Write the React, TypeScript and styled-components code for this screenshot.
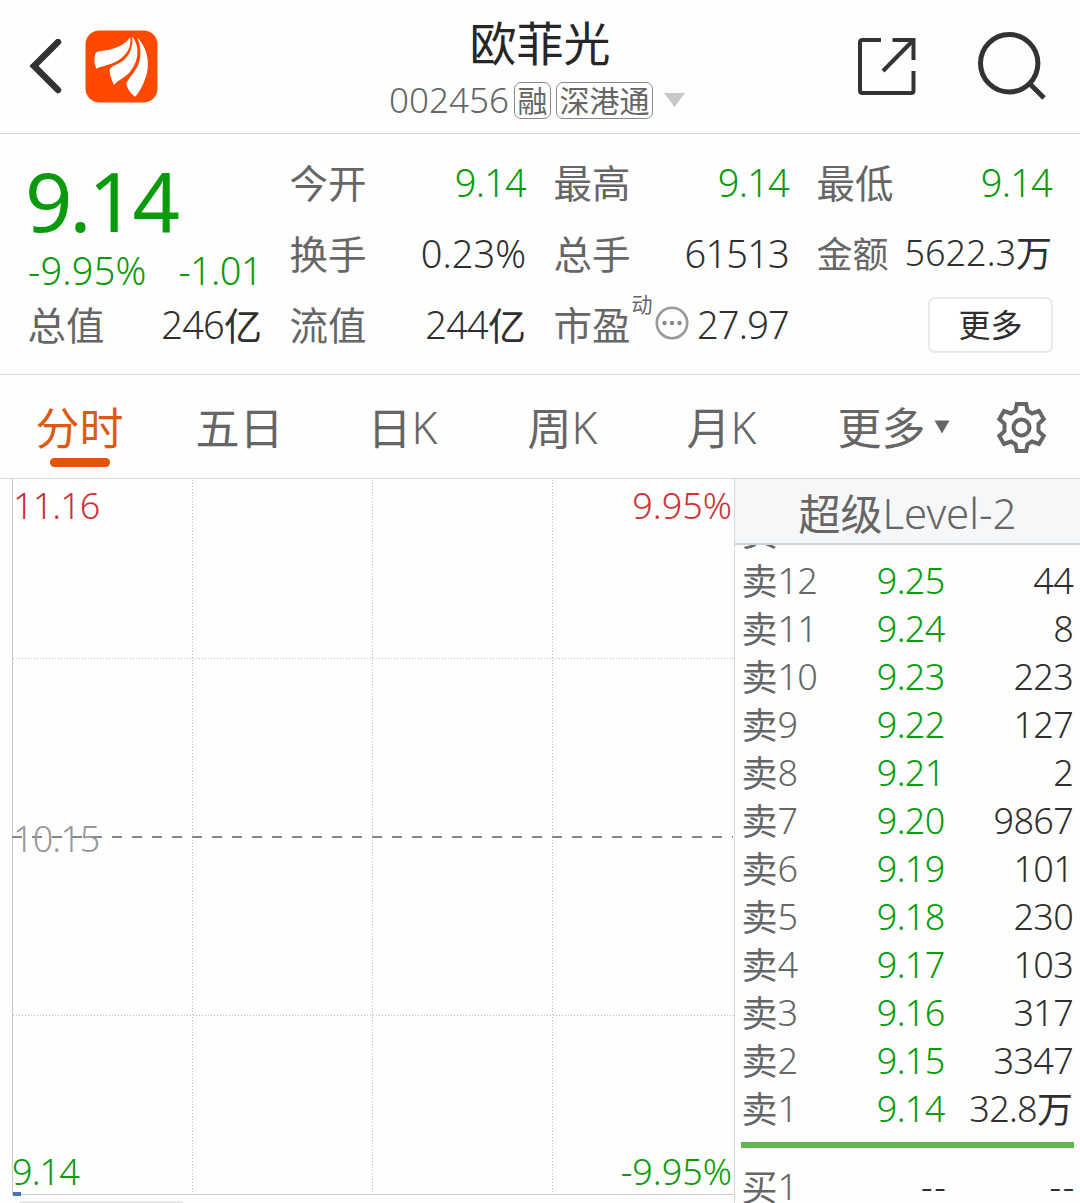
import React from 'react';
import styled, { createGlobalStyle } from 'styled-components';

const GREEN = '#0a9b0c';
const RED = '#cc3333';
const DARK = '#2f2f2f';
const GRAY = '#666666';
const LINE = '#d6d6d6';

const Global = createGlobalStyle`
  * { box-sizing: border-box; }
  html, body { margin: 0; background: #fefefe; }
  body {
    font-family: "Noto Sans", "Noto Sans CJK SC", sans-serif;
    font-weight: 300;
    color: ${DARK};
  }
`;

const Screen = styled.main`
  width: 1080px;
  height: 1203px;
  overflow: hidden;
  display: flex;
  flex-direction: column;
  background: #fefefe;
`;

const Han = styled.span`
  font-family: "Noto Sans CJK SC", sans-serif;
  font-weight: 400;
  line-height: 0;
  letter-spacing: 0;
  vertical-align: -1px;
`;

/* ---------- header ---------- */

const Header = styled.header`
  height: 134px;
  flex: none;
  display: grid;
  grid-template-columns: 360px 1fr 360px;
  border-bottom: 1px solid ${LINE};
`;

const HeaderLeft = styled.div`
  display: flex;
  align-items: center;
  gap: 22px;
  padding-left: 29px;
`;

const HeaderRight = styled.div`
  display: flex;
  align-items: center;
  justify-content: flex-end;
  gap: 60px;
  padding-right: 33px;
`;

const Title = styled.div`
  display: flex;
  flex-direction: column;
  align-items: center;
  padding-top: 12px;
`;

const Name = styled.h1`
  margin: 0;
  font: 400 47px/58px "Noto Sans CJK SC", sans-serif;
  color: #262626;
`;

const CodeRow = styled.div`
  display: flex;
  align-items: center;
  height: 38px;
  margin-top: 11px;
  margin-left: -5px;
  color: ${GRAY};
`;

const Code = styled.span`
  font-size: 35px;
  line-height: 38px;
`;

const Badge = styled.span`
  height: 37px;
  margin-left: 5px;
  padding: 0 2.5px;
  border: 1px solid #888;
  border-radius: 7px;
  font: 400 30px/33px "Noto Sans CJK SC", sans-serif;
`;

const Caret = styled.svg`
  margin-left: 10px;
`;

/* ---------- quote ---------- */

const Quote = styled.section`
  height: 241px;
  flex: none;
  display: grid;
  grid-template-columns: 234px 236px 235px 235px;
  column-gap: 28px;
  padding: 13px 28px 0;
  border-bottom: 1px solid ${LINE};
`;

const Column = styled.div`
  display: grid;
  grid-template-rows: 71px 71px 71px;
`;

const PriceColumn = styled.div`
  display: grid;
  grid-template-rows: 104px 38px 71px;
`;

const Price = styled.div`
  margin-left: -3px;
  font-size: 83px;
  font-weight: 400;
  line-height: 105px;
  letter-spacing: -3.2px;
  color: ${GREEN};
`;

const Change = styled.div`
  display: flex;
  justify-content: space-between;
  font-size: 38px;
  line-height: 38px;
  color: ${GREEN};
`;

const ChangeValue = styled.span<{ $tight?: boolean }>`
  letter-spacing: ${(p) => (p.$tight ? '-0.6px' : '0.2px')};
`;

const Stat = styled.div`
  display: flex;
  align-items: center;
  justify-content: space-between;
  white-space: nowrap;
`;

const StatLabel = styled.span<{ $size?: number }>`
  margin-left: -0.5px;
  padding-bottom: 4px;
  font: 400 ${(p) => p.$size ?? 38.5}px/46px "Noto Sans CJK SC", sans-serif;
  color: ${GRAY};
`;

const StatValue = styled.span<{ $color?: string; $size?: number; $tight?: boolean }>`
  padding-bottom: 2px;
  font-size: ${(p) => p.$size ?? 38}px;
  line-height: 50px;
  letter-spacing: ${(p) => (p.$tight ? '-0.8px' : '0')};
  color: ${(p) => p.$color ?? DARK};
`;

const PeLabel = styled.span`
  display: flex;
  align-items: center;
`;

const Sup = styled.span`
  font: 400 21px/24px "Noto Sans CJK SC", sans-serif;
  color: ${GRAY};
  align-self: flex-start;
  margin: -9px 2px 0 1px;
`;

const Dots = styled.svg`
  margin-bottom: 3px;
`;

const MoreButton = styled.button`
  justify-self: end;
  align-self: center;
  width: 125px;
  height: 56px;
  margin-right: -1px;
  padding: 0 0 4px;
  border: 2px solid #e8eaea;
  border-radius: 7px;
  background: #fff;
  color: ${DARK};
  font: 400 32px/46px "Noto Sans CJK SC", sans-serif;
`;

/* ---------- tabs ---------- */

const Tabs = styled.nav`
  height: 104px;
  flex: none;
  display: flex;
  border-bottom: 1px solid ${LINE};
`;

const Tab = styled.div<{ $width: number; $active?: boolean }>`
  width: ${(p) => p.$width}px;
  display: flex;
  flex-direction: column;
  align-items: center;
  padding-top: 22px;
  font-size: 44px;
  line-height: 60px;
  color: ${(p) => (p.$active ? '#dc5a14' : GRAY)};
`;

const TabText = styled.span`
  display: flex;
  align-items: center;
  gap: 8px;
`;

const TabWord = styled.span`
  height: 60px;
  margin-left: -1px;
`;

const Underline = styled.span`
  width: 60px;
  height: 9px;
  margin-top: 1px;
  border-radius: 5px;
  background: #e85205;
`;

const GearTab = styled.div`
  padding: 25px 0 0 10px;
`;

/* ---------- body ---------- */

const Body = styled.section`
  flex: 1;
  min-height: 0;
  display: flex;
`;

const Chart = styled.div`
  position: relative;
  width: 734px;
  flex: none;
`;

const ChartLabel = styled.span<{ $color: string; $top: number; $left?: number; $right?: number }>`
  position: absolute;
  top: ${(p) => p.$top}px;
  ${(p) => (p.$left !== undefined ? `left: ${p.$left}px; letter-spacing: -0.9px;` : `right: ${p.$right}px;`)}
  font-size: 36px;
  line-height: 48px;
  color: ${(p) => p.$color};
`;

const Book = styled.div`
  flex: 1;
  display: flex;
  flex-direction: column;
  border-left: 1px solid ${LINE};
`;

const BookHeader = styled.div`
  height: 66px;
  flex: none;
  display: flex;
  justify-content: center;
  border-bottom: 2px solid #d3d6d9;
  background: #f6f7f9;
  font-size: 42px;
  line-height: 68px;
  color: ${GRAY};
`;

const BookList = styled.div`
  flex: 1;
  min-height: 0;
  overflow: hidden;
  display: flex;
  flex-direction: column;
`;

const Row = styled.div`
  height: 48px;
  display: grid;
  grid-template-columns: 90px 113px 1fr;
  padding: 0 7px 0 6.5px;
  font-size: 36px;
  line-height: 48px;
  letter-spacing: -0.7px;
  white-space: nowrap;
`;

const Sells = styled.div`
  flex: none;
  margin-top: -37px;

  ${Row}:first-child {
    margin-bottom: 1px;
  }
`;

const Level = styled.span`
  color: ${GRAY};
`;

const Cell = styled.span<{ $color?: string; $wide?: boolean }>`
  text-align: right;
  letter-spacing: ${(p) => (p.$wide ? '1.6px' : 'inherit')};
  margin-right: ${(p) => (p.$wide ? '-3px' : '0')};
  color: ${(p) => p.$color ?? DARK};
`;

const Divider = styled.div`
  height: 6px;
  flex: none;
  margin: 9px 6px 15px;
  background: #5fb64a;
`;

/* ---------- icons ---------- */

const BackIcon = () => (
  <svg width="34" height="56" viewBox="0 0 34 56">
    <path d="M29 3 L5 27 L29 51" fill="none" stroke="#333" strokeWidth="6.5" strokeLinecap="round" />
  </svg>
);

const Logo = () => (
  <svg width="73" height="73" viewBox="0 0 73 73">
    <rect x="0.5" y="0.5" width="72" height="72" rx="14" fill="#ff4800" />
    <path d="M45.3 7.3 C39 16 28 20 15 21.200 Q11 21.500 10.500 23.500 Q8 30 11.300 38.700 C18 35.500 26 35 33 30.500 C42 25 46.500 17 45.300 7.300Z" fill="#fff" />
    <path d="M47.3 6.7 C48 14 46.500 22 40 29 C35 34 29 34.500 25 38.500 C23.500 43 27 50 29 55 C34 49 42 47 46.300 40 C53 31 55.500 17 47.300 6.700Z" fill="#fff" />
    <path d="M52.3 7.7 C56 16 56.500 26 53.500 34 C50.500 42 45 46 41.300 53.300 C42 59 46 64 50.300 66.700 C55 61 58 55 59.700 50 C66 36 63 18 52.300 7.700Z" fill="#fff" />
  </svg>
);

const ShareIcon = () => (
  <svg width="60" height="60" viewBox="0 0 60 60" fill="none" stroke="#333" strokeWidth="4">
    <path d="M24 3 H5.500 Q3 3 3 5.500 V53.500 Q3 56 5.500 56 H54 Q56.500 56 56.500 53.500 V34" />
    <path d="M35.500 3 H56.500 V23" />
    <path d="M56 3.500 L26 34" />
  </svg>
);

const SearchIcon = () => (
  <svg width="70" height="70" viewBox="0 0 70 70" fill="none" stroke="#333" strokeWidth="5">
    <circle cx="32.200" cy="31.300" r="28.700" />
    <path d="M52.500 51.500 L67 66" />
  </svg>
);

const DotsIcon = () => (
  <Dots width="34" height="34" viewBox="0 0 34 34">
    <circle cx="17" cy="17" r="15.200" fill="none" stroke="#999" strokeWidth="2.600" />
    <circle cx="9.500" cy="17" r="2.200" fill="#888" />
    <circle cx="17" cy="17" r="2.200" fill="#888" />
    <circle cx="24.500" cy="17" r="2.200" fill="#888" />
  </Dots>
);

const GearIcon = () => (
  <svg width="54" height="54" viewBox="0 0 54 54" fill="none" stroke={GRAY} strokeWidth="4">
    <path d="M22.800 4 H32.200 L33.500 10.800 L38 13.500 L45 11 L49.700 19 L44.500 23.800 V31.200 L49.700 36 L45 44 L38 41.500 L33.500 44.200 L32.200 51 H22.800 L21.500 44.200 L17 41.500 L10 44 L5.300 36 L10.500 31.200 V23.800 L5.300 19 L10 11 L17 13.500 L21.500 10.800 Z" />
    <circle cx="27.500" cy="27.500" r="8" />
  </svg>
);

const Grid = () => (
  <svg width="734" height="724" viewBox="0 0 734 724" shapeRendering="crispEdges">
    <g stroke="#bdbdbd" strokeWidth="1" strokeDasharray="1 2">
      {[192.5, 372.5, 552.5].map((x) => (
        <path key={x} d={`M${x} 1 V715`} />
      ))}
      {[179.5, 536.5].map((y) => (
        <path key={y} d={`M13 ${y} H734`} />
      ))}
    </g>
    <path d="M12.500 0 V716" stroke="#c8c8c8" />
    <path d="M12 715.500 H733" stroke="#c8c8c8" />
    <path d="M12 358 H733" stroke="#888" strokeWidth="2" strokeDasharray="10 10" />
    <rect x="13" y="713" width="8" height="4" fill="#4477ae" />
    <rect x="17" y="722" width="168" height="12" rx="6" fill="#e6e6e6" />
  </svg>
);

/* ---------- data ---------- */

const sells: [string, string, string][] = [
  ['13', '9.26', '6'],
  ['12', '9.25', '44'],
  ['11', '9.24', '8'],
  ['10', '9.23', '223'],
  ['9', '9.22', '127'],
  ['8', '9.21', '2'],
  ['7', '9.20', '9867'],
  ['6', '9.19', '101'],
  ['5', '9.18', '230'],
  ['4', '9.17', '103'],
  ['3', '9.16', '317'],
  ['2', '9.15', '3347'],
  ['1', '9.14', '32.8万'],
];

const withHan = (text: string) =>
  text.split(/([\u4e00-\u9fff]+)/).filter(Boolean).map((part, i) =>
    /[\u4e00-\u9fff]/.test(part) ? <Han key={i}>{part}</Han> : part,
  );

const StatItem = ({ label, value, color, size, loose }: { label: string; value: string; color?: string; size?: number; loose?: boolean }) => (
  <Stat>
    <StatLabel $size={size}>{label}</StatLabel>
    <StatValue $color={color} $size={size} $tight={!loose}>{withHan(value)}</StatValue>
  </Stat>
);

export default function App() {
  return (
    <Screen>
      <Global />
      <Header>
        <HeaderLeft>
          <BackIcon />
          <Logo />
        </HeaderLeft>
        <Title>
          <Name>欧菲光</Name>
          <CodeRow>
            <Code>002456</Code>
            <Badge>融</Badge>
            <Badge>深港通</Badge>
            <Caret width="23" height="16" viewBox="0 0 23 16">
              <path d="M1 1 H22 L11.500 15Z" fill="#c8c8c8" />
            </Caret>
          </CodeRow>
        </Title>
        <HeaderRight>
          <ShareIcon />
          <SearchIcon />
        </HeaderRight>
      </Header>

      <Quote>
        <PriceColumn>
          <Price>9.14</Price>
          <Change>
            <ChangeValue>-9.95%</ChangeValue>
            <ChangeValue $tight>-1.01</ChangeValue>
          </Change>
          <StatItem label="总值" value="246亿" />
        </PriceColumn>
        <Column>
          <StatItem label="今开" value="9.14" color={GREEN} />
          <StatItem label="换手" value="0.23%" loose />
          <StatItem label="流值" value="244亿" />
        </Column>
        <Column>
          <StatItem label="最高" value="9.14" color={GREEN} />
          <StatItem label="总手" value="61513" />
          <Stat>
            <PeLabel>
              <StatLabel>市盈</StatLabel>
              <Sup>动</Sup>
              <DotsIcon />
            </PeLabel>
            <StatValue $tight>27.97</StatValue>
          </Stat>
        </Column>
        <Column>
          <StatItem label="最低" value="9.14" color={GREEN} />
          <StatItem label="金额" value="5622.3万" size={36} loose />
          <MoreButton>更多</MoreButton>
        </Column>
      </Quote>

      <Tabs>
        <Tab $width={160} $active>
          <TabWord>{withHan('分时')}</TabWord>
          <Underline />
        </Tab>
        <Tab $width={160}><TabWord>{withHan('五日')}</TabWord></Tab>
        <Tab $width={166}><TabWord>{withHan('日K')}</TabWord></Tab>
        <Tab $width={154}><TabWord>{withHan('周K')}</TabWord></Tab>
        <Tab $width={164}><TabWord>{withHan('月K')}</TabWord></Tab>
        <Tab $width={180}>
          <TabText>
            <TabWord>{withHan('更多')}</TabWord>
            <svg width="16" height="14" viewBox="0 0 16 14">
              <path d="M0.500 0.500 H15.500 L8 13.500Z" fill={GRAY} />
            </svg>
          </TabText>
        </Tab>
        <GearTab><GearIcon /></GearTab>
      </Tabs>

      <Body>
        <Chart>
          <Grid />
          <ChartLabel $color={RED} $top={3} $left={13}>11.16</ChartLabel>
          <ChartLabel $color={RED} $top={3} $right={2}>9.95%</ChartLabel>
          <ChartLabel $color="#999" $top={336} $left={13}>10.15</ChartLabel>
          <ChartLabel $color={GREEN} $top={669} $left={12}>9.14</ChartLabel>
          <ChartLabel $color={GREEN} $top={669} $right={2}>-9.95%</ChartLabel>
        </Chart>
        <Book>
          <BookHeader><span>{withHan('超级Level-2')}</span></BookHeader>
          <BookList>
            <Sells>
              {sells.map(([level, price, volume]) => (
                <Row key={level}>
                  <Level>{withHan(`卖${level}`)}</Level>
                  <Cell $color={GREEN}>{price}</Cell>
                  <Cell>{withHan(volume)}</Cell>
                </Row>
              ))}
            </Sells>
            <Divider />
            <Row>
              <Level>{withHan('买1')}</Level>
              <Cell $wide>--</Cell>
              <Cell $wide>--</Cell>
            </Row>
          </BookList>
        </Book>
      </Body>
    </Screen>
  );
}
